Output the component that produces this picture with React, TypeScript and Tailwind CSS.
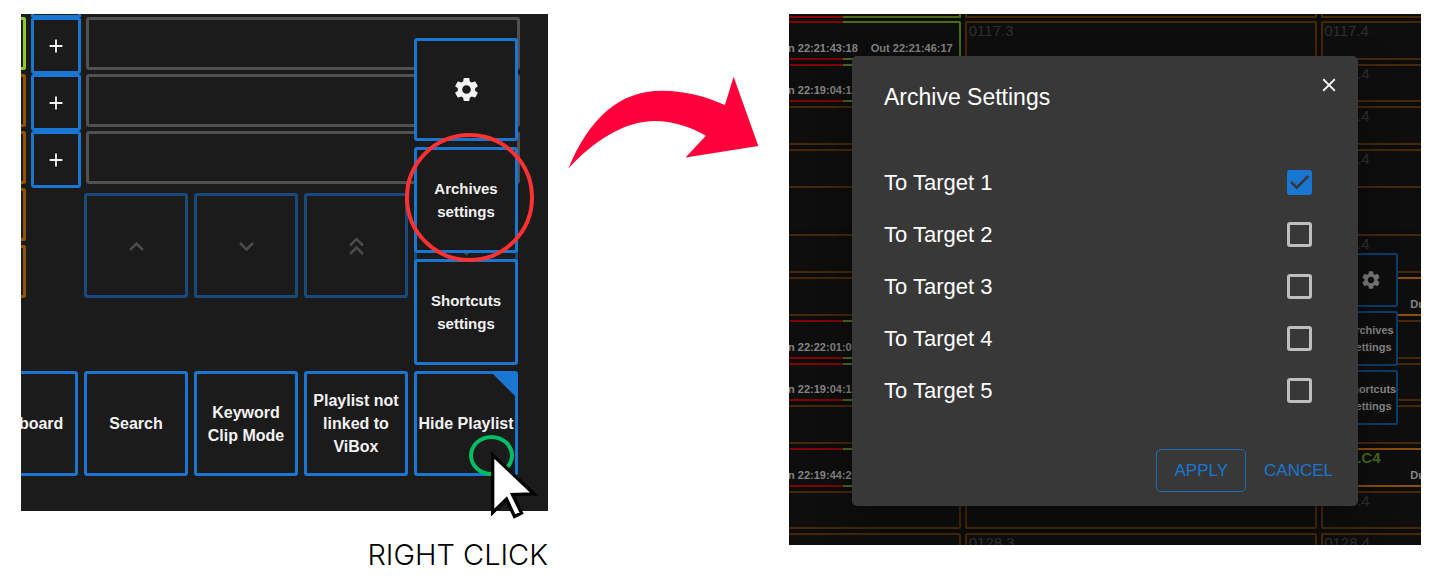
import { useState } from 'react';
import type { ReactNode } from 'react';
import clsx from 'clsx';
import { MdAdd, MdClose, MdSettings } from 'react-icons/md';

type CellKind = 'dim' | 'bright' | 'clip' | 'none';

interface ClipRow {
  id: string;
  first: CellKind;
  last: CellKind;
  tcIn?: string;
  tcOut?: string;
  middle?: string;
  label?: string;
}

const clipRows: ClipRow[] = [
  { id: '1', first: 'clip', last: 'dim', tcIn: '22:21:43:18', tcOut: '22:21:46:17', middle: '0117.3', label: '0117.4' },
  { id: '2', first: 'clip', last: 'dim', tcIn: '22:19:04:17', label: '.4' },
  { id: '3', first: 'dim', last: 'dim', label: '.4' },
  { id: '4', first: 'dim', last: 'dim', label: '.4' },
  { id: '5', first: 'none', last: 'none' },
  { id: '6', first: 'dim', last: 'dim', label: '.4' },
  { id: '7', first: 'dim', last: 'bright' },
  { id: '8', first: 'clip', last: 'dim', tcIn: '22:22:01:09' },
  { id: '9', first: 'clip', last: 'dim', tcIn: '22:19:04:17' },
  { id: '10', first: 'dim', last: 'dim' },
  { id: '11', first: 'clip', last: 'bright', tcIn: '22:19:44:20', label: '.C4' },
  { id: '12', first: 'dim', last: 'dim', label: '.4' },
  { id: '13', first: 'dim', last: 'dim', middle: '0128.3', label: '0128.4' },
];

const targets = ['To Target 1', 'To Target 2', 'To Target 3', 'To Target 4', 'To Target 5'];

const Chevron = ({ d }: { d: string }) => (
  <svg viewBox="0 0 28 28" className="size-7" fill="none" stroke="currentColor" strokeWidth="2.600">
    <path d={d} />
  </svg>
);

const TileButton = ({ children, muted, className }: { children: ReactNode; muted?: boolean; className?: string }) => (
  <button
    type="button"
    className={clsx(
      'relative flex w-full items-center justify-center rounded-[3px] border-[3px] bg-[#1b1b1b] text-center font-bold',
      muted ? 'border-[#184a7c] text-[#4a4a4a]' : 'border-[#1976d2] text-[#f2f2f2]',
      className ?? 'h-[105px] text-[16px] leading-[23px]',
    )}
  >
    {children}
  </button>
);

const PlaylistPanel = () => (
  <div className="overflow-hidden bg-[#1b1b1b] pb-[35px] pr-[30px]">
    <div className="flex">
      {/* Clip edges */}
      <div className="mr-[5px] flex w-[5px] flex-col gap-1 pt-[3px]">
        <div className="h-[53px] rounded-r-[3px] border-[3px] border-l-0 border-[#8fca28]" />
        <div className="h-[53px] rounded-r-[3px] border-[3px] border-l-0 border-[#8f5208]" />
        <div className="h-[53px] rounded-r-[3px] border-[3px] border-l-0 border-[#8f5208]" />
        <div className="h-[53px] rounded-r-[3px] border-[3px] border-l-0 border-[#8f5208]" />
        <div className="h-[53px] rounded-r-[3px] border-[3px] border-l-0 border-[#8f5208]" />
      </div>

      {/* Add buttons */}
      <div className="mr-[3px] w-[50px]">
        <div className="h-[3px] border-x-[3px] border-b-2 border-[#1976d2]" />
        {[1, 2, 3].map((slot) => (
          <button
            key={slot}
            type="button"
            aria-label="Add"
            className="flex h-[57px] w-full items-center justify-center rounded-[3px] border-[3px] border-[#1976d2] text-[#f2f2f2]"
          >
            <MdAdd size={22} />
          </button>
        ))}
      </div>

      {/* Slots and navigation */}
      <div className="min-w-0 flex-1 pt-[3px]">
        <div className="-mr-[2px] flex flex-col gap-1 pl-[2px]">
          <div className="h-[53px] rounded-[3px] border-[3px] border-[#505050]" />
          <div className="h-[53px] rounded-[3px] border-[3px] border-[#505050]" />
          <div className="h-[53px] rounded-[3px] border-[3px] border-[#505050]" />
        </div>
        <div className="mt-[9px] grid grid-cols-4 gap-[6px]">
          <TileButton muted>
            <Chevron d="M8 18L14.500 11.500L21 18" />
          </TileButton>
          <TileButton muted>
            <Chevron d="M8 11L14.500 17.500L21 11" />
          </TileButton>
          <TileButton muted>
            <Chevron d="M8 13.500L14.500 7L21 13.500M8 22L14.500 15.500L21 22" />
          </TileButton>
          <TileButton muted>
            <Chevron d="M8 7L14.500 13.500L21 7M8 15.500L14.500 22L21 15.500" />
          </TileButton>
        </div>
      </div>
    </div>

    {/* Bottom toolbar */}
    <div className="-ml-[47px] mt-[73px] grid grid-cols-5 gap-[6px]">
      <TileButton>Clipboard</TileButton>
      <TileButton>Search</TileButton>
      <TileButton>
        Keyword
        <br />
        Clip Mode
      </TileButton>
      <TileButton>
        Playlist not
        <br />
        linked to
        <br />
        ViBox
      </TileButton>
      <div className="relative">
        <TileButton>
          <span className="whitespace-nowrap">Hide Playlist</span>
          <span className="absolute right-0 top-0 size-[22px] bg-[#1976d2] [clip-path:polygon(0_0,100%_0,100%_100%)]" />
        </TileButton>
        <div className="absolute inset-x-0 bottom-full mb-[6px] flex flex-col gap-[6px]">
          <TileButton className="h-[103px]">
            <MdSettings size={29} />
          </TileButton>
          <TileButton className="h-[106px] text-[15px] leading-[23px]">
            Archives
            <br />
            settings
          </TileButton>
          <TileButton className="h-[106px] text-[15px] leading-[23px]">
            Shortcuts
            <br />
            settings
          </TileButton>
        </div>
      </div>
    </div>
  </div>
);

const ClipCell = ({ kind, children }: { kind: CellKind; children?: ReactNode }) => (
  <div
    className={clsx(
      'relative min-w-0 rounded-[2px] border-2 bg-[#0e0e0e]',
      kind === 'dim' && 'border-[#462805]',
      kind === 'bright' && 'border-[#8a4e04]',
      kind === 'clip' && 'border-l-0 border-[#4a6a18]',
      kind === 'none' && 'border-transparent',
    )}
  >
    {kind === 'clip' && (
      <>
        <span className="absolute -top-0.5 left-0 h-0.5 w-[58px] bg-[#800404]" />
        <span className="absolute -bottom-0.5 left-0 h-0.5 w-[58px] bg-[#800404]" />
      </>
    )}
    {children}
  </div>
);

const ClipGrid = () => (
  <div className="absolute inset-0 overflow-hidden">
    <div className="-ml-1 flex flex-col gap-[3px]">
      <div className="grid h-1 grid-cols-[176fr_353fr_100fr] gap-x-1">
        <div className="relative border-b-2 border-r-2 border-[#4a6a18]">
          <span className="absolute -bottom-0.5 left-0 h-0.5 w-[58px] bg-[#800404]" />
        </div>
        <div className="border-x-2 border-b-2 border-[#462805]" />
        <div className="-mr-1 border-x-2 border-b-2 border-[#462805]" />
      </div>

      <div className="-mr-1 grid h-[551px] auto-rows-fr grid-cols-[176fr_353fr_104fr] gap-1">
        {clipRows.map((row) => (
          <div key={row.id} className="contents">
            <ClipCell kind={row.first}>
              {row.tcIn && (
                <div className="flex h-full items-end justify-between pb-[2px] pr-[6px] text-[11px] font-bold leading-4 text-[#858585]">
                  <span>In {row.tcIn}</span>
                  {row.tcOut && <span>Out {row.tcOut}</span>}
                </div>
              )}
            </ClipCell>
            <ClipCell kind={row.first === 'none' ? 'none' : 'dim'}>
              {row.middle && (
                <span className="block pl-[2px] text-[15px] leading-4 text-[#303030]">{row.middle}</span>
              )}
            </ClipCell>
            <ClipCell kind={row.last}>
              {row.label && (
                <span
                  className={clsx(
                    'block pl-[1px] text-[15px] leading-4',
                    row.label.length < 4 && 'ml-[33px]',
                    row.last === 'bright' ? 'font-bold text-[#44691a]' : 'text-[#303030]',
                  )}
                >
                  {row.label}
                </span>
              )}
              {row.last === 'bright' && (
                <span className="absolute -right-[2px] bottom-[2px] text-[11px] font-bold leading-4 text-[#858585]">
                  Du
                </span>
              )}
            </ClipCell>
          </div>
        ))}
      </div>
    </div>

    {/* Settings menu left open behind the dialog */}
    <div className="absolute right-[23px] top-[239px] flex w-[55px] flex-col gap-1 text-center text-[11px] font-bold leading-[17px] text-[#858585]">
      <div className="flex h-[54px] items-center justify-center rounded-[2px] border-2 border-[#0c3c6b] bg-[#0e0e0e]">
        <MdSettings size={22} className="text-[#7a7a7a]" />
      </div>
      <div className="flex h-[55px] items-center justify-center rounded-[2px] border-2 border-[#0c3c6b] bg-[#0e0e0e]">
        Archives
        <br />
        settings
      </div>
      <div className="flex h-[55px] items-center justify-center rounded-[2px] border-2 border-[#0c3c6b] bg-[#0e0e0e]">
        Shortcuts
        <br />
        settings
      </div>
    </div>
  </div>
);

const ArchiveDialog = () => {
  const [selected, setSelected] = useState<string[]>(['To Target 1']);

  const toggle = (target: string) => {
    setSelected((prev) => (prev.includes(target) ? prev.filter((t) => t !== target) : [...prev, target]));
  };

  return (
    <div
      role="dialog"
      aria-labelledby="archive-title"
      className="relative mx-[63px] mb-[39px] mt-[42px] rounded-[5px] bg-[#383838] pb-[14px] pt-[25px] text-white shadow-[0_12px_36px_4px_rgba(0,0,0,0.3)]"
    >
      <h2 id="archive-title" className="pl-8 text-[23px] leading-8">
        Archive Settings
      </h2>
      <button type="button" aria-label="Close" className="absolute right-[18px] top-[18px]">
        <MdClose size={22} />
      </button>

      <div className="mt-[43px] pl-8 pr-[46px]">
        {targets.map((target) => (
          <label key={target} className="flex h-[52px] items-center justify-between text-[22px]">
            {target}
            <span className="relative flex size-[25px]">
              <input
                type="checkbox"
                checked={selected.includes(target)}
                onChange={() => toggle(target)}
                className="size-[25px] appearance-none rounded-[3px] border-[3px] border-[#bebebe] checked:border-[#1976d2] checked:bg-[#1976d2]"
              />
              {selected.includes(target) && (
                <svg viewBox="0 0 25 25" className="pointer-events-none absolute inset-0" fill="none">
                  <path d="M4 12l5.700 5.700L21.300 6" stroke="#383838" strokeWidth="2.700" />
                </svg>
              )}
            </span>
          </label>
        ))}
      </div>

      <div className="mt-[33px] flex items-center justify-end gap-[18px] pr-[25px] text-[17px] text-[#1976d2]">
        <button type="button" className="h-[43px] rounded-[5px] border border-[#1f6cb5] px-[17px]">
          APPLY
        </button>
        <button type="button" className="h-[43px]">
          CANCEL
        </button>
      </div>
    </div>
  );
};

const App = () => {
  return (
    <main className="grid grid-cols-[527fr_241fr_632fr] items-start overflow-hidden bg-white pl-[21px] pr-[18px] pt-[14px] font-['Liberation_Sans',Arial,sans-serif]">
      <section>
        <div className="relative">
          <PlaylistPanel />

          {/* Highlights and pointer */}
          <div className="pointer-events-none absolute right-[14px] top-[119px] size-[129px] rounded-full border-4 border-[#ff3131]" />
          <div className="pointer-events-none absolute bottom-[35px] right-[34px] h-[41px] w-[45px] rounded-[50%] border-4 border-[#00bf63]" />
          <svg
            viewBox="0 0 47 70"
            className="pointer-events-none absolute -bottom-[9px] right-[10px] h-[70px] w-[47px] overflow-visible"
          >
            <path
              d="M1.700 5V62.500L15.500 49L23.500 66.500L30.500 63L21.500 44.500L43 44Z"
              fill="#fff"
              stroke="#000"
              strokeWidth="3.300"
            />
          </svg>
        </div>
        <p className="mt-6 text-right font-['Inter',sans-serif] text-[29px] font-light leading-10 text-black">
          RIGHT CLICK
        </p>
      </section>

      <div className="pl-5 pr-[30px] pt-[62px]">
        <svg viewBox="24 48 572 280" className="w-full" fill="#ff003a">
          <path d="M25 325C90 170 180 92 305 92C370 92 435 108 494 135L520 50L594 258L376 292L437 227C390 200 335 183 285 183C190 183 100 245 25 325Z" />
        </svg>
      </div>

      <section className="relative flow-root overflow-hidden bg-[#0c0c0c]">
        <ClipGrid />
        <ArchiveDialog />
      </section>
    </main>
  );
};

export default App;
